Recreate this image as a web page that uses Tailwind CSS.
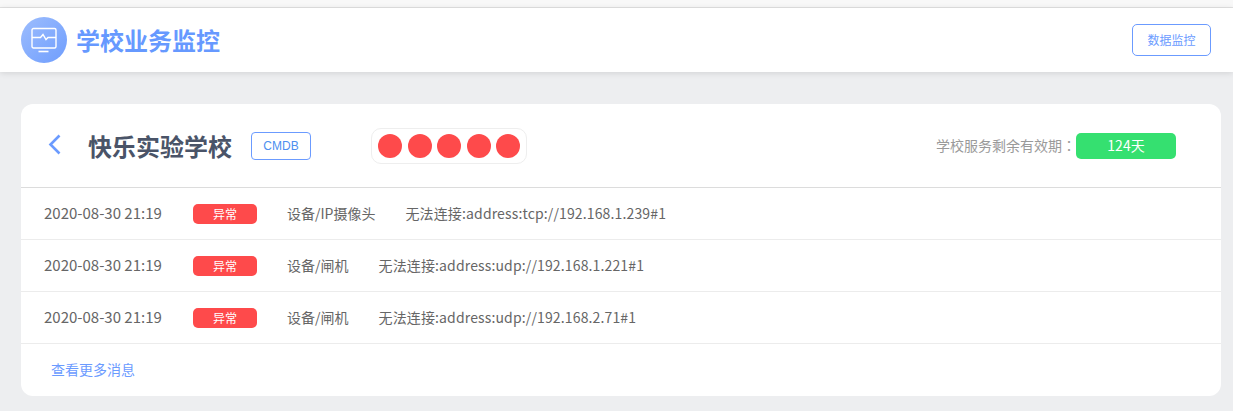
<!DOCTYPE html>
<html lang="zh-CN">
<head>
    <meta charset="UTF-8">
    <title>学校业务监控</title>
    <script src="https://cdn.jsdelivr.net/npm/@tailwindcss/browser@4"></script>
</head>
<body class="h-[411px] overflow-hidden bg-[#edeef0] font-['Noto_Sans_CJK_SC','Liberation_Sans',sans-serif]">

    <!-- top strip -->
    <div class="h-2 border-b border-[#e2e2e2] bg-[#f8f8f8]"></div>

    <!-- header -->
    <header class="flex h-[64px] items-center justify-between bg-white pl-[21px] pr-[22px] shadow-[0_1px_6px_rgba(0,0,0,0.12)]">
        <div class="flex items-center gap-[9px]">
            <div class="flex h-[46px] w-[46px] items-center justify-center rounded-full bg-gradient-to-br from-[#9dbdfd] to-[#6f9dfd]">
                <svg width="26" height="26" viewBox="0 0 26 26" fill="none" stroke="white" stroke-width="1.4">
                    <rect x="1" y="1.500" width="24" height="19.500" rx="1.500"/>
                    <path d="M1 10.500h8.500l2.500-3 3 5 2-2h8"/>
                    <path d="M7.500 24.500h10" stroke-width="1.600"/>
                </svg>
            </div>
            <h1 class="text-[24px] leading-[32px] font-bold text-[#6699ff]">学校业务监控</h1>
        </div>
        <button class="h-[32px] w-[79px] rounded-[5px] border border-[#6b9bff] text-[12px] text-[#6b9bff]">数据监控</button>
    </header>

    <main class="pl-[21px] pr-[12px] pt-[32px]">
        <section class="rounded-[12px] bg-white">
            <!-- school row -->
            <div class="flex h-[84px] items-center border-b border-[#dcdcdc] pl-[27px]">
                <svg width="13" height="21" viewBox="0 0 13 21" fill="none" stroke="#6b9bff" stroke-width="2.600" class="mr-[28px] -translate-y-[1px]">
                    <path d="M11.500 1.500 2.500 10.500l9 9"/>
                </svg>
                <h2 class="w-[162px] -translate-x-[1px] text-[24px] font-bold text-[#4a5468]">快乐实验学校</h2>
                <button class="h-[28px] w-[60px] rounded-[4px] border border-[#6b9bff] font-['Liberation_Sans'] text-[12px] text-[#4d8fef]">CMDB</button>
                <div class="ml-[60px] flex h-[36px] w-[156px] items-center justify-between rounded-[10px] border border-[#eeeeee] px-[6px]">
                    <span class="h-6 w-6 rounded-full bg-[#fe4a4b]"></span>
                    <span class="h-6 w-6 rounded-full bg-[#fe4a4b]"></span>
                    <span class="h-6 w-6 rounded-full bg-[#fe4a4b]"></span>
                    <span class="h-6 w-6 rounded-full bg-[#fe4a4b]"></span>
                    <span class="h-6 w-6 rounded-full bg-[#fe4a4b]"></span>
                </div>
                <div class="ml-auto mr-[45px] flex items-center">
                    <span class="text-[14px] text-[#9a9a9a]">学校服务剩余有效期<span lang="zh-TW" class="font-['Noto_Sans_CJK_TC']">：</span></span>
                    <span class="flex h-[26px] w-[100px] items-center justify-center rounded-[5px] bg-[#35e070] text-[14px] text-white">124天</span>
                </div>
            </div>

            <!-- messages -->
            <div class="flex h-[52px] items-center border-b border-[#ececec] pl-[23px] text-[14px] text-[#666666]">
                <span class="w-[149px] text-[15px]">2020-08-30 21:19</span>
                <span class="flex h-[20px] w-[64px] items-center justify-center rounded-[5px] bg-[#fe4a4b] text-[12px] text-white">异常</span>
                <span class="mx-[30px]">设备/IP摄像头</span>
                <span class="tracking-[0.14px]">无法连接:address:tcp://192.168.1.239#1</span>
            </div>
            <div class="flex h-[52px] items-center border-b border-[#ececec] pl-[23px] text-[14px] text-[#666666]">
                <span class="w-[149px] text-[15px]">2020-08-30 21:19</span>
                <span class="flex h-[20px] w-[64px] items-center justify-center rounded-[5px] bg-[#fe4a4b] text-[12px] text-white">异常</span>
                <span class="mx-[30px]">设备/闸机</span>
                <span class="tracking-[0.14px]">无法连接:address:udp://192.168.1.221#1</span>
            </div>
            <div class="flex h-[52px] items-center border-b border-[#ececec] pl-[23px] text-[14px] text-[#666666]">
                <span class="w-[149px] text-[15px]">2020-08-30 21:19</span>
                <span class="flex h-[20px] w-[64px] items-center justify-center rounded-[5px] bg-[#fe4a4b] text-[12px] text-white">异常</span>
                <span class="mx-[30px]">设备/闸机</span>
                <span class="tracking-[0.14px]">无法连接:address:udp://192.168.2.71#1</span>
            </div>

            <div class="flex h-[52px] items-center pb-[2px] pl-[30px] text-[14px] text-[#6b9bff]">查看更多消息</div>
        </section>
    </main>

</body>
</html>
